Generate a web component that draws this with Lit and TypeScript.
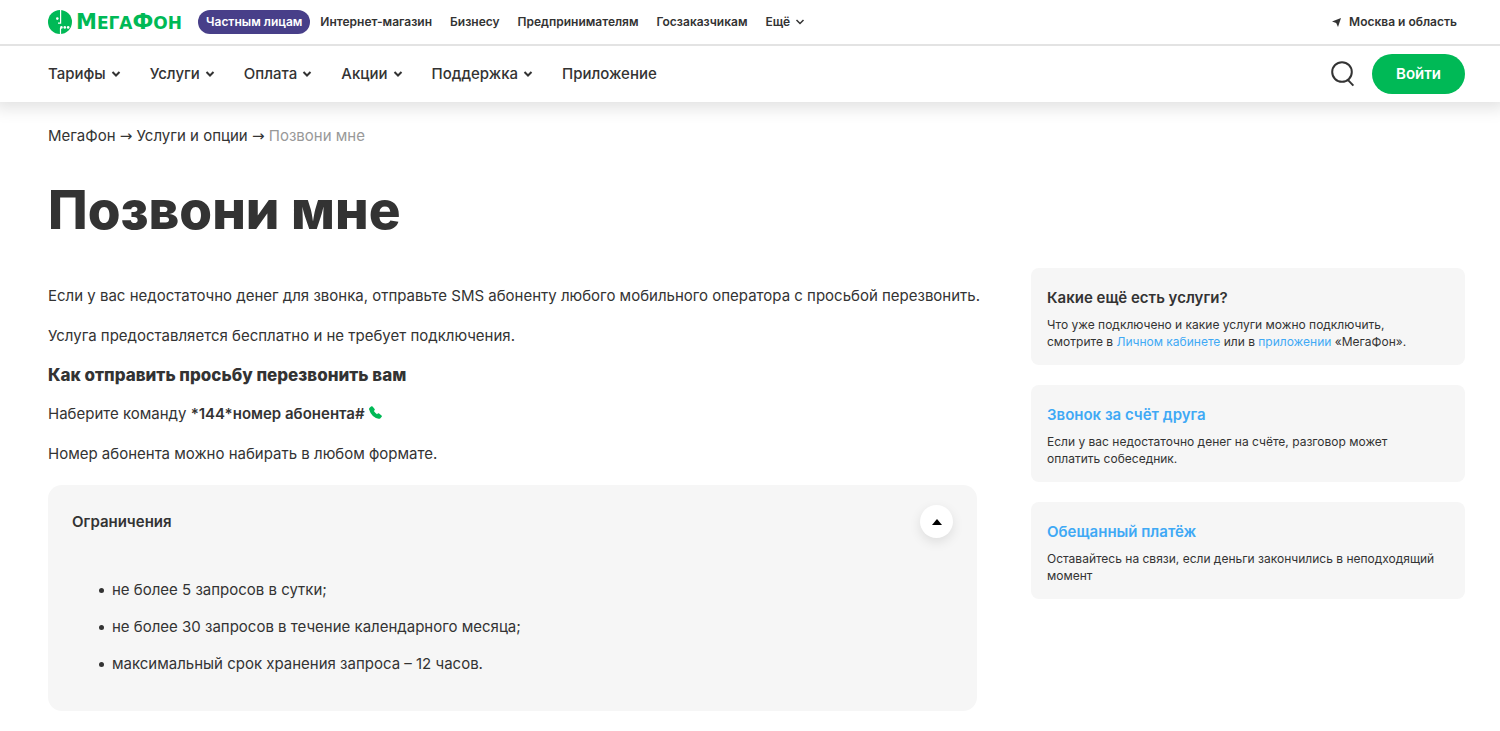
import { LitElement, html, css, svg } from "lit";
import { customElement, state } from "lit/decorators.js";

const chevron = html`<svg class="chevron" viewBox="0 0 10 8" aria-hidden="true"><path d="M1.5 2 L5 5.5 L8.5 2" /></svg>`;

const face = svg`
  <circle cx="12" cy="12" r="12" fill="#00b956" />
  <path d="M12.6 0V13.2H10M12.5 18V24" fill="none" stroke="#fff" stroke-width="1.2" />
  <circle cx="9.3" cy="8.6" r="1.3" fill="#fff" />
  <circle cx="13.4" cy="17.4" r="1.3" fill="#fff" />
  <circle cx="16.8" cy="17.4" r="1.3" fill="#fff" />
  <circle cx="20.2" cy="17.4" r="1.3" fill="#fff" />
`;

@customElement("app-root")
export class AppRoot extends LitElement {
  @state() private open = true;

  private segments = ["Интернет-магазин", "Бизнесу", "Предпринимателям", "Госзаказчикам"];
  private menu = ["Тарифы", "Услуги", "Оплата", "Акции", "Поддержка"];
  private limits = [
    "не более 5 запросов в сутки;",
    "не более 30 запросов в течение календарного месяца;",
    "максимальный срок хранения запроса – 12 часов.",
  ];

  static styles = css`
    :host {
      display: block;
      background: #fff;
      color: #333;
      font: 15px/24px Inter, "Liberation Sans", sans-serif;
    }
    * { box-sizing: border-box; }
    a { color: inherit; text-decoration: none; }
    button { font: inherit; color: inherit; border: 0; padding: 0; background: none; cursor: pointer; }
    h1, h2, h3, p, ul { margin: 0; padding: 0; }
    .chevron { width: 10px; height: 8px; fill: none; stroke: currentColor; stroke-width: 2; }

    .topbar {
      position: relative;
      z-index: 1;
      display: flex;
      align-items: center;
      height: 46px;
      padding: 0 43px 0 48px;
      border-bottom: 2px solid #e3e3e3;
      background: #fff;
      font-size: 12px;
      font-weight: 600;
    }
    .logo { display: flex; align-items: center; gap: 4px; margin-right: 16px; }
    .face { width: 24px; height: 24px; }
    .word { color: #00b956; font: 700 17px/24px "DejaVu Sans", sans-serif; white-space: nowrap; }
    .cap { font-size: 21px; }
    .segments { display: flex; align-items: center; gap: 18px; }
    .current {
      padding: 0 8px;
      margin-right: -8px;
      border-radius: 12px;
      background: #483f89;
      color: #fff;
    }
    .more { display: flex; align-items: center; gap: 5px; }
    .more .chevron { stroke-width: 1.5; }
    .region { display: flex; align-items: center; gap: 8px; margin-left: auto; }
    .arrow { width: 9px; height: 9px; fill: #333; }

    .nav {
      display: flex;
      align-items: center;
      height: 56px;
      padding: 0 35px 0 48px;
      box-shadow: 0 0 16px 6px rgba(0, 0, 0, 0.12);
      font-weight: 500;
    }
    .menu { display: flex; gap: 29px; }
    .item { display: flex; align-items: center; gap: 5px; }
    .actions { display: flex; align-items: center; gap: 16px; margin-left: auto; }
    .search { display: flex; }
    .lens { width: 26px; height: 26px; fill: none; stroke: #333; stroke-width: 2; }
    .login {
      height: 40px;
      padding: 0 24px;
      border-radius: 20px;
      background: #00b956;
      color: #fff;
      font-weight: 600;
    }

    .page { padding: 22px 35px 20px 48px; }
    .crumb { color: #999; }
    .sep { font-family: "DejaVu Sans", sans-serif; }
    .title { margin-top: 32px; font-size: 53px; line-height: 60px; font-weight: 800; }
    .columns {
      display: grid;
      grid-template-columns: minmax(0, 929fr) minmax(0, 434fr);
      gap: 54px;
      align-items: start;
      margin-top: 28px;
    }
    .article { display: flex; flex-direction: column; gap: 16px; padding-top: 16px; }
    .article p { margin-right: -24px; }
    .subtitle { font-size: 17px; line-height: 22px; font-weight: 800; }
    .command { font-weight: 600; }
    .phone { width: 13px; height: 13px; fill: #00b956; }

    .panel { margin-top: 3px; padding: 20px 24px 35px; border-radius: 14px; background: #f6f6f6; }
    .panelhead { display: flex; align-items: center; justify-content: space-between; }
    .paneltitle { font-size: 15px; line-height: 24px; font-weight: 600; }
    .toggle {
      display: grid;
      place-items: center;
      width: 33px;
      height: 33px;
      border-radius: 50%;
      background: #fff;
      box-shadow: 0 4px 12px rgba(0, 0, 0, 0.1);
    }
    .triangle { width: 10px; height: 6px; fill: #000; }
    .limits { display: grid; gap: 13px; margin: 40px 0 0 40px; list-style: none; }
    .limit { display: flex; align-items: center; }
    .limit::before {
      content: "";
      width: 5px;
      height: 5px;
      margin: 0 8px 0 -13px;
      border-radius: 50%;
      background: #333;
    }

    .side { display: grid; gap: 20px; }
    .card { padding: 20px 16px 15px; border-radius: 8px; background: #f6f6f6; font-size: 12px; line-height: 17px; }
    .cardtitle { margin-bottom: 8px; font-size: 15px; line-height: 20px; font-weight: 600; }
    .link { color: #3fa9f5; }
  `;

  render() {
    return html`
      <header>
        <div class="topbar">
          <a class="logo" href="#" aria-label="МегаФон">
            <svg class="face" viewBox="0 0 24 24" aria-hidden="true">${face}</svg>
            <span class="word"><span class="cap">М</span>ЕГА<span class="cap">Ф</span>ОН</span>
          </a>
          <nav class="segments">
            <a class="current" href="#">Частным лицам</a>
            ${this.segments.map((s) => html`<a href="#">${s}</a>`)}
            <button class="more">Ещё ${chevron}</button>
          </nav>
          <button class="region">
            <svg class="arrow" viewBox="0 0 9 9" aria-hidden="true"><path d="M9 0L6 9L4.2 5L0 3.6Z" /></svg>
            Москва и область
          </button>
        </div>
        <div class="nav">
          <nav class="menu">
            ${this.menu.map((m) => html`<a class="item" href="#">${m} ${chevron}</a>`)}
            <a class="item" href="#">Приложение</a>
          </nav>
          <div class="actions">
            <button class="search" aria-label="Поиск">
              <svg class="lens" viewBox="0 0 26 26"><circle cx="12" cy="11" r="9.8" /><path d="M17.6 18.6L23.4 24.6" /></svg>
            </button>
            <button class="login">Войти</button>
          </div>
        </div>
      </header>
      <main class="page">
        <nav><a href="#">МегаФон</a> <span class="sep">→</span> <a href="#">Услуги и опции</a> <span class="sep">→</span> <span class="crumb">Позвони мне</span></nav>
        <h1 class="title">Позвони мне</h1>
        <div class="columns">
          <article class="article">
            <p>Если у вас недостаточно денег для звонка, отправьте SMS абоненту любого мобильного оператора с просьбой перезвонить.</p>
            <p>Услуга предоставляется бесплатно и не требует подключения.</p>
            <h2 class="subtitle">Как отправить просьбу перезвонить вам</h2>
            <p>
              Наберите команду <span class="command">*144*номер абонента#</span>
              <svg class="phone" viewBox="0 0 13 13" aria-hidden="true"><path d="M.4 2L2 .4Q2.8-.2 3.6.6L5.6 2.9Q6.1 3.6 5.5 4.3L4.9 5Q6.1 7 8 8.2L8.8 7.5Q9.4 7 10.1 7.5L12.5 9.4Q13.2 10 12.7 10.8L11.2 12.5Q10.5 13 9.5 12.8Q2.3 10.8.1 3.4Q-.1 2.5.4 2Z" /></svg>
            </p>
            <p>Номер абонента можно набирать в любом формате.</p>
            <section class="panel">
              <div class="panelhead">
                <h3 class="paneltitle">Ограничения</h3>
                <button class="toggle" aria-label="Свернуть" aria-expanded=${this.open} @click=${() => (this.open = !this.open)}>
                  <svg class="triangle" viewBox="0 0 10 6"><path d="M5 0L10 6H0Z" /></svg>
                </button>
              </div>
              ${this.open
                ? html`<ul class="limits">${this.limits.map((l) => html`<li class="limit">${l}</li>`)}</ul>`
                : null}
            </section>
          </article>
          <aside class="side">
            <section class="card">
              <h3 class="cardtitle">Какие ещё есть услуги?</h3>
              <p>Что уже подключено и какие услуги можно подключить,<br />смотрите в <a class="link" href="#">Личном кабинете</a> или в <a class="link" href="#">приложении</a> «МегаФон».</p>
            </section>
            <section class="card">
              <h3 class="cardtitle"><a class="link" href="#">Звонок за счёт друга</a></h3>
              <p>Если у вас недостаточно денег на счёте, разговор может<br />оплатить собеседник.</p>
            </section>
            <section class="card">
              <h3 class="cardtitle"><a class="link" href="#">Обещанный платёж</a></h3>
              <p>Оставайтесь на связи, если деньги закончились в неподходящий момент</p>
            </section>
          </aside>
        </div>
      </main>
    `;
  }
}
